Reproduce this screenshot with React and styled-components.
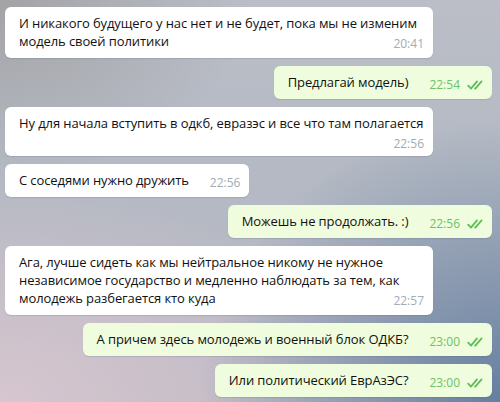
import React from "react";
import styled, { createGlobalStyle } from "styled-components";

const Global = createGlobalStyle`
  html, body { margin: 0; padding: 0; }
  body {
    width: 500px;
    height: 402px;
    overflow: hidden;
    font-family: "Open Sans", "Noto Sans", sans-serif;
  }
`;

const Chat = styled.div`
  box-sizing: border-box;
  width: 500px;
  height: 402px;
  padding: 7px 8px 0 5px;
  display: flex;
  flex-direction: column;
  gap: 8px;
  background:
    radial-gradient(ellipse 60% 70% at 100% 100%, rgba(96, 124, 158, 0.95) 0%, rgba(110, 135, 165, 0) 100%),
    radial-gradient(ellipse 70% 55% at 0% 100%, rgba(214, 198, 207, 1) 0%, rgba(214, 198, 207, 0) 100%),
    radial-gradient(ellipse 50% 45% at 0% 0%, rgba(160, 160, 163, 0.9) 0%, rgba(160, 160, 163, 0) 100%),
    linear-gradient(180deg, #bbbec7 0%, #b4b9c3 45%, #bdb9c4 100%);
`;

const Row = styled.div`
  display: flex;
  justify-content: ${(p) => (p.$out ? "flex-end" : "flex-start")};
`;

const Bubble = styled.div`
  display: flow-root;
  box-sizing: border-box;
  max-width: 428px;
  padding: 7px ${(p) => (p.$out ? "8px" : "9px")} 8px 14px;
  border-radius: 6px;
  background: ${(p) => (p.$out ? "#effdde" : "#ffffff")};
  box-shadow: 0 1px 1px rgba(80, 90, 110, 0.18);
  font-size: 13px;
  line-height: 18px;
  letter-spacing: -0.1px;
  color: #111;
`;

const Meta = styled.span`
  float: right;
  display: flex;
  align-items: center;
  gap: 7px;
  margin: 5px 0 -2px 21px;
  height: 13px;
  font-size: 12px;
  line-height: 13px;
  letter-spacing: 0;
  color: ${(p) => (p.$out ? "#6cc264" : "#a0acb6")};
`;

const Ticks = () => (
  <svg width="17" height="10" viewBox="0 0 17 10" fill="none">
    <path d="M1.2 5.6 L4 8.6 L10 1.4" stroke="#5fbd58" strokeWidth="1.8" strokeLinecap="round" strokeLinejoin="round" />
    <path d="M8 8.4 L8.3 8.6 L14.6 1.4" stroke="#5fbd58" strokeWidth="1.8" strokeLinecap="round" strokeLinejoin="round" />
  </svg>
);

const messages = [
  { t: "И никакого будущего у нас нет и не будет, пока мы не изменим модель своей политики", time: "20:41" },
  { t: "Предлагай модель)", time: "22:54", out: true },
  { t: "Ну для начала вступить в одкб, евразэс и все что там полагается", time: "22:56" },
  { t: "С соседями нужно дружить", time: "22:56" },
  { t: "Можешь не продолжать. :)", time: "22:56", out: true },
  {
    t: "Ага, лучше сидеть как мы нейтральное никому не нужное независимое государство и медленно наблюдать за тем, как молодежь разбегается кто куда",
    time: "22:57",
  },
  { t: "А причем здесь молодежь и военный блок ОДКБ?", time: "23:00", out: true },
  { t: "Или политический ЕврАзЭС?", time: "23:00", out: true },
];

export default function App() {
  return (
    <>
      <Global />
      <Chat>
        {messages.map((m, i) => (
          <Row key={i} $out={m.out}>
            <Bubble $out={m.out}>
              {m.t}{" "}
              <Meta $out={m.out}>
                {m.time}
                {m.out && <Ticks />}
              </Meta>
            </Bubble>
          </Row>
        ))}
      </Chat>
    </>
  );
}
